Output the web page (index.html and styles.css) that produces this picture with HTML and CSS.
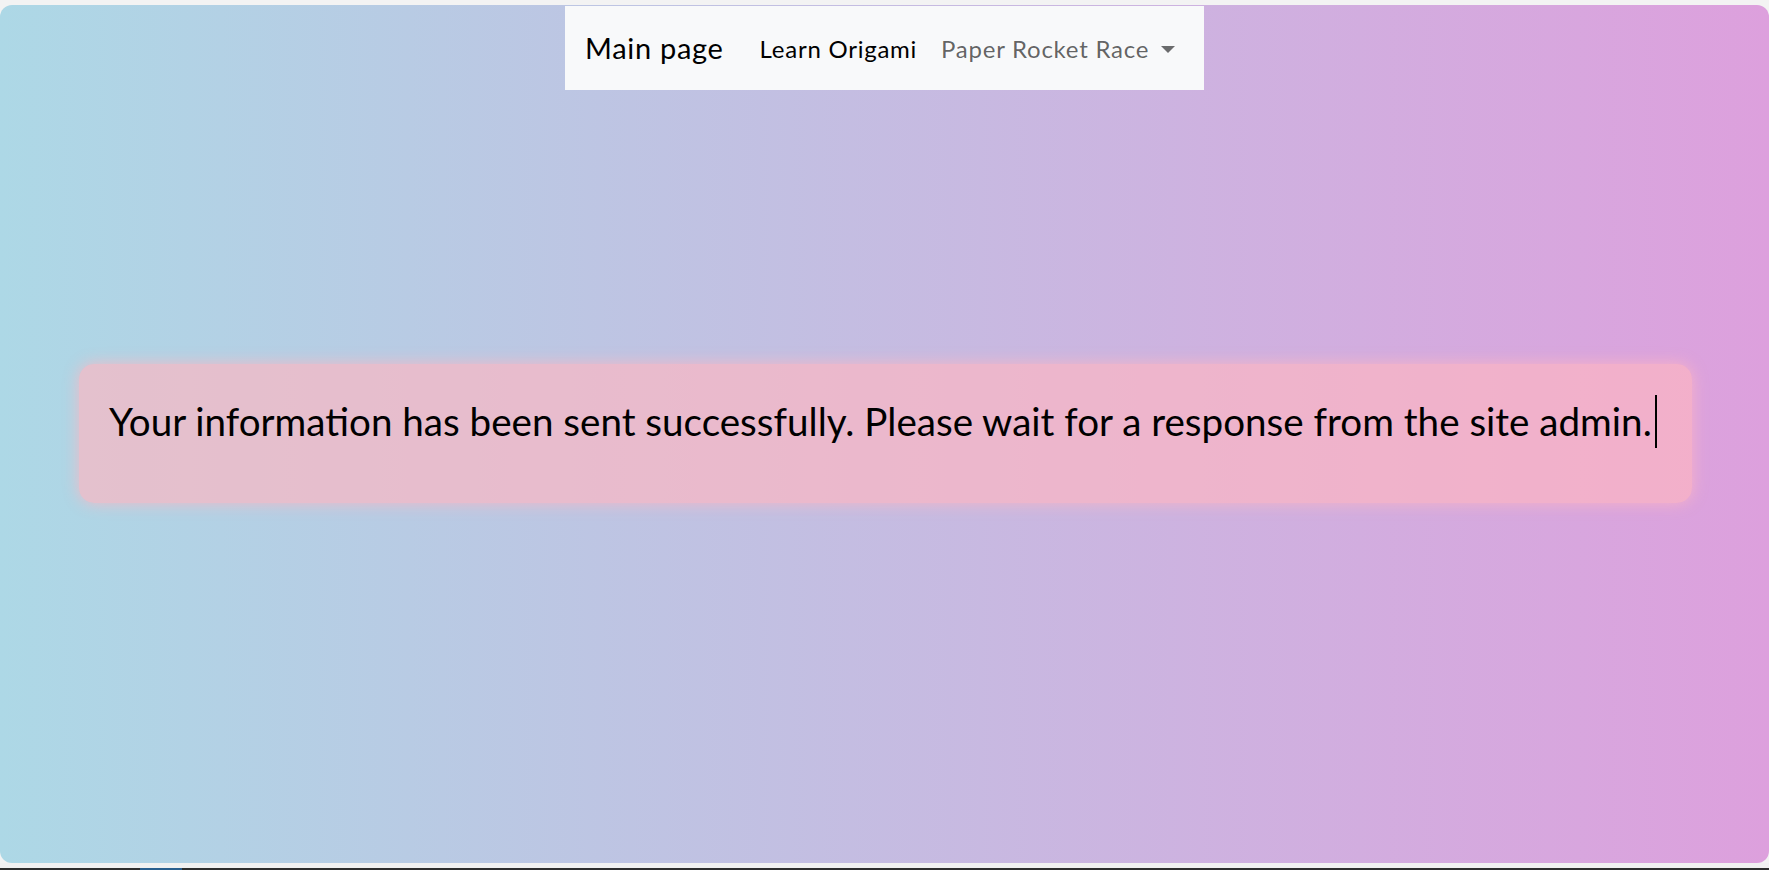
FILE: index.html
```html
<!DOCTYPE html>
<html lang="en">
<head>
<meta charset="utf-8">
<title>Message sent</title>
<link rel="stylesheet" href="styles.css">
</head>
<body>
  <div class="top-gap"></div>
  <main class="panel">
    <nav class="navbar">
      <a class="brand" href="#">Main page</a>
      <a class="nav-link active" href="#">Learn Origami</a>
      <a class="nav-link dropdown" href="#">Paper Rocket Race<span class="caret"></span></a>
    </nav>
    <div class="alert">
      <p class="message">Your information has been sent successfully. Please wait for a response from the site admin.<span class="cursor"></span></p>
    </div>
  </main>
  <div class="bottom-gap"></div>
  <div class="taskbar">
    <span class="task-btn"></span>
  </div>
</body>
</html>
```
FILE: styles.css
```css
html, body {
  margin: 0;
  padding: 0;
}
body {
  width: 1769px;
  height: 870px;
  overflow: hidden;
  background: #f3f3f3;
  font-family: "Comic Sans MS", "Lato", "Open Sans", sans-serif;
}
.top-gap {
  height: 5px;
  background: #f3f3f3;
}
.panel {
  height: 858px;
  border-radius: 12px;
  background: linear-gradient(to right, #add8e6, #dda0dd);
  display: flex;
  flex-direction: column;
  align-items: stretch;
}
.navbar {
  align-self: center;
  width: 639px;
  height: 84px;
  margin-top: 1px;
  box-sizing: border-box;
  padding: 0 20px;
  background: #f8f9fa;
  display: flex;
  align-items: center;
}
.navbar a {
  text-decoration: none;
}
.brand {
  color: #000;
  font-size: 29px;
  letter-spacing: 0.7px;
  margin-right: 36px;
  padding-bottom: 2px;
}
.nav-link {
  font-size: 24px;
  letter-spacing: 0.75px;
  color: #000;
}
.nav-link.active {
  margin-right: 24px;
}
.nav-link.dropdown {
  color: rgba(0, 0, 0, 0.62);
  display: flex;
  align-items: center;
}
.caret {
  display: inline-block;
  margin-left: 12px;
  margin-top: 2px;
  border-top: 7px solid #6a6b6c;
  border-left: 7px solid transparent;
  border-right: 7px solid transparent;
}
.alert {
  margin: 274px 77px 0 79px;
  height: 139px;
  box-sizing: border-box;
  padding: 31px 30px 0 30px;
  border-radius: 15px;
  background: rgba(255, 182, 193, 0.66);
  box-shadow: 0 0 16px rgba(255, 182, 193, 0.85);
}
.message {
  margin: 0;
  font-size: 38.6px;
  line-height: 53px;
  color: #000;
}
.cursor {
  display: inline-block;
  width: 2px;
  height: 53px;
  background: #000;
  margin-left: 3px;
  vertical-align: top;
}
.bottom-gap {
  height: 5px;
  background: #f1f1f1;
}
.taskbar {
  height: 2px;
  background: #2e2e2e;
  position: relative;
}
.task-btn {
  position: absolute;
  left: 140px;
  top: 0;
  width: 42px;
  height: 2px;
  background: #2a5f8e;
}
```
